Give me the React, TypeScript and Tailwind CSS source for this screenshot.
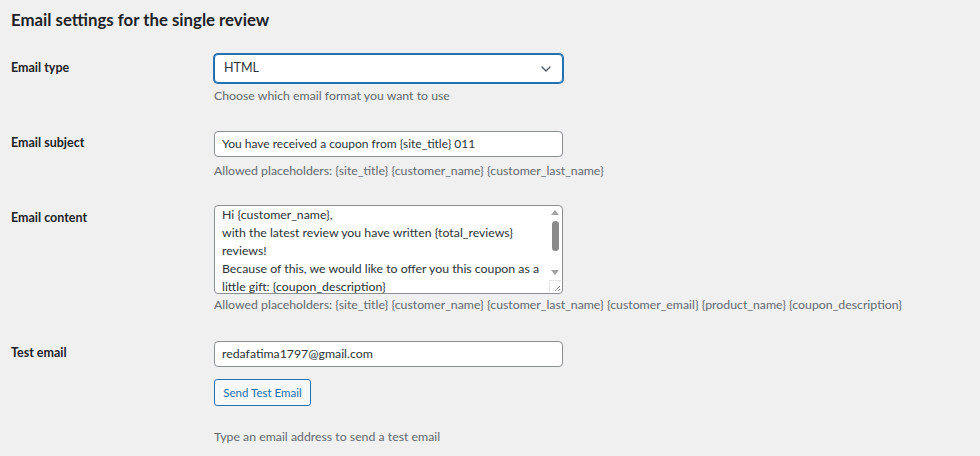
import { ChevronDown } from 'lucide-react';

const font = { fontFamily: 'Lato, "Noto Sans", sans-serif' };

function Row({ label, top, children }: { label: string; top: string; children: React.ReactNode }) {
  return (
    <div className="flex">
      <div className={`w-[203px] shrink-0 text-[12.5px] font-bold leading-[20px] text-[#1d2327] ${top}`}>{label}</div>
      <div className="flex flex-col">{children}</div>
    </div>
  );
}

function Help({ children, mt = 'mt-[4px]' }: { children: React.ReactNode; mt?: string }) {
  return <p className={`whitespace-nowrap text-[12.3px] leading-[20px] text-[#646970] ${mt}`}>{children}</p>;
}

export default function App() {
  return (
    <div className="min-h-screen w-[980px] h-[456px] overflow-hidden bg-[#f0f0f1] pl-[11px] text-[#1d2327]" style={font}>
      <h2 className="pt-[9px] text-[16.8px] font-bold leading-[22px]">Email settings for the single review</h2>

      <div className="mt-[23px] flex flex-col">
        <Row label="Email type" top="pt-[4px]">
          <div className="flex h-[29px] w-[349px] items-center justify-between rounded-[4px] border border-[#2271b1] bg-white pl-[9px] pr-[8px] shadow-[0_0_0_1px_#2271b1]">
            <span className="text-[12.5px] text-[#2c3338]">HTML</span>
            <ChevronDown className="h-[16px] w-[16px] text-[#50575e]" strokeWidth={2} />
          </div>
          <Help mt="mt-[3px]">Choose which email format you want to use</Help>
        </Row>

        <div className="mt-[25px]">
          <Row label="Email subject" top="pt-[2px]">
            <div className="flex h-[26px] w-[349px] items-center whitespace-nowrap rounded-[4px] border border-[#8c8f94] bg-white px-[7px] text-[12px] text-[#2c3338]">
              You have received a coupon from {'{site_title}'} 011
            </div>
            <Help>Allowed placeholders: {'{site_title}'} {'{customer_name}'} {'{customer_last_name}'}</Help>
          </Row>
        </div>

        <div className="mt-[24px]">
          <Row label="Email content" top="pt-[3px]">
            <div className="flex h-[89px] w-[349px] overflow-hidden rounded-[4px] border border-[#8c8f94] bg-white">
              <div className="flex-1 overflow-hidden whitespace-nowrap pl-[7px] text-[12.3px] leading-[18px] text-[#2c3338]">
                Hi {'{customer_name}'},<br />
                with the latest review you have written {'{total_reviews}'}<br />
                reviews!<br />
                Because of this, we would like to offer you this coupon as a<br />
                little gift: {'{coupon_description}'}
              </div>
              <div className="flex w-[14px] shrink-0 flex-col items-center">
                <div className="mt-[4px] h-0 w-0 border-x-[4px] border-b-[5px] border-x-transparent border-b-[#a3a3a3]" />
                <div className="mt-[6px] h-[30px] w-[7px] rounded-full bg-[#8a8a8a]" />
                <div className="mt-[19px] h-0 w-0 border-x-[4px] border-t-[5px] border-x-transparent border-t-[#a3a3a3]" />
                <div className="mt-auto mb-[1px] flex h-[12px] w-[12px] items-end justify-end border-l border-t border-[#e5e5e5]">
                  <svg width="8" height="8" viewBox="0 0 8 8">
                    <path d="M7 2 L2 7 M7 5 L5 7" stroke="#8a8a8a" strokeWidth="1" />
                  </svg>
                </div>
              </div>
            </div>
            <Help mt="mt-[1px]">
              Allowed placeholders: {'{site_title}'} {'{customer_name}'} {'{customer_last_name}'} {'{customer_email}'} {'{product_name}'} {'{coupon_description}'}
            </Help>
          </Row>
        </div>

        <div className="mt-[26px]">
          <Row label="Test email" top="pt-[2px]">
            <div className="flex h-[26px] w-[349px] items-center rounded-[4px] border border-[#8c8f94] bg-white px-[7px] text-[12.3px] text-[#2c3338]">
              redafatima1797@gmail.com
            </div>
            <button className="mt-[12px] h-[27px] w-[97px] whitespace-nowrap rounded-[3px] border border-[#2271b1] bg-[#f6f7f7] text-[11.5px] text-[#2271b1]">
              Send Test Email
            </button>
            <Help mt="mt-[21px]">Type an email address to send a test email</Help>
          </Row>
        </div>
      </div>
    </div>
  );
}
